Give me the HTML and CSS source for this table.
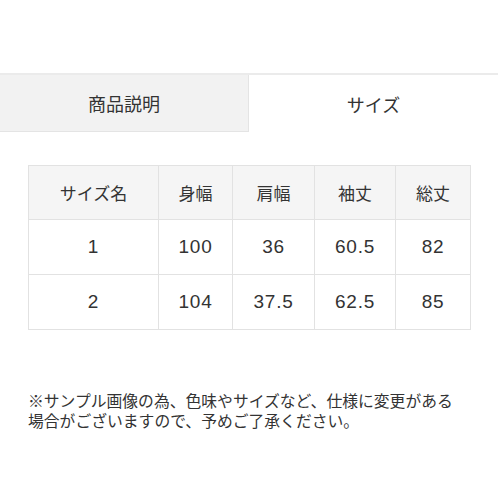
FILE: index.html
```html
<!DOCTYPE html>
<html lang="ja">
<head>
<meta charset="utf-8">
<link rel="stylesheet" href="styles.css">
</head>
<body>
<div class="page">
  <div class="tabs">
    <div class="tab tab-inactive">商品説明</div>
    <div class="tab tab-active">サイズ</div>
  </div>
  <table class="size-table">
    <colgroup>
      <col class="c1"><col class="c2"><col class="c3"><col class="c4"><col class="c5">
    </colgroup>
    <thead>
      <tr><th>サイズ名</th><th>身幅</th><th>肩幅</th><th>袖丈</th><th>総丈</th></tr>
    </thead>
    <tbody>
      <tr><td>1</td><td>100</td><td>36</td><td>60.5</td><td>82</td></tr>
      <tr><td>2</td><td>104</td><td>37.5</td><td>62.5</td><td>85</td></tr>
    </tbody>
  </table>
  <p class="note">※サンプル画像の為、色味やサイズなど、仕様に変更がある<br>場合がございますので、予めご了承ください。</p>
</div>
</body>
</html>
```

FILE: styles.css
```css
html, body {
  margin: 0;
  padding: 0;
  background: #ffffff;
}
body {
  font-family: "Noto Sans CJK JP", sans-serif;
  color: #333333;
}
.page {
  padding-top: 73px;
}
.tabs {
  display: flex;
  border-top: 2px solid #ebebeb;
  height: 57px;
}
.tab {
  flex: 0 0 249px;
  display: flex;
  align-items: center;
  justify-content: center;
  font-size: 18px;
  color: #333333;
}
.tab-inactive {
  background: #f2f2f2;
  border-right: 1px solid #e4e4e4;
  border-bottom: 1px solid #e4e4e4;
  box-sizing: border-box;
}
.tab-active {
  background: #ffffff;
  flex: 1 1 auto;
}
.size-table {
  margin: 33px 0 0 28px;
  border-collapse: collapse;
  table-layout: fixed;
  width: 442px;
}
.c1 { width: 130px; }
.c2 { width: 74px; }
.c3 { width: 82px; }
.c4 { width: 81px; }
.c5 { width: 75px; }
.size-table th,
.size-table td {
  border: 1px solid #e2e2e2;
  text-align: center;
  padding: 0;
  color: #333333;
}
.size-table th {
  background: #f5f5f5;
  font-weight: normal;
  font-size: 17px;
  height: 53px;
}
.size-table td {
  height: 54px;
  font-family: "Liberation Sans", "Noto Sans CJK JP", sans-serif;
  font-size: 19px;
  letter-spacing: 0.8px;
}
.note {
  margin: 61px 0 0 28px;
  font-size: 15.8px;
  line-height: 20px;
  color: #333333;
}
```
